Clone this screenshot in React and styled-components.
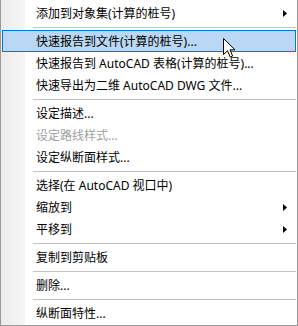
import React from 'react'
import styled, { createGlobalStyle } from "styled-components"

const GlobalStyle = createGlobalStyle`
  html, body {
    margin: 0;
    padding: 0;
    background: #ffffff;
  }
`;

const items = [
  { label: '添加到对象集(计算的桩号)', sub: true },
  'sep',
  { label: '快速报告到文件(计算的桩号)...', active: true },
  { label: '快速报告到 AutoCAD 表格(计算的桩号)...' },
  { label: '快速导出为二维 AutoCAD DWG 文件...' },
  'sep',
  { label: '设定描述...' },
  { label: '设定路线样式...', disabled: true },
  { label: '设定纵断面样式...' },
  'sep',
  { label: '选择(在 AutoCAD 视口中)' },
  { label: '缩放到', sub: true },
  { label: '平移到', sub: true },
  'sep',
  { label: '复制到剪贴板' },
  'sep',
  { label: '删除...' },
  'sep',
  { label: '纵断面特性...' },
];

function App() {
  return (
    <>
      <GlobalStyle />
      <Menu>
        {items.map((item, i) => {
          if (item === 'sep') return <Separator key={i} />

          return (
            <Item key={i} $active={item.active} $disabled={item.disabled}>
              <span>{item.label}</span>
              {item.sub && (
                <svg width="4" height="7" viewBox="0 0 4 7">
                  <polygon points="0,0 4,3.5 0,7" fill="#000" />
                </svg>
              )}
            </Item>
          )
        })}

        <Cursor width="13" height="20" viewBox="0 0 13 20">
          <path
            d="M0.5 0.5 L0.5 16.5 L4.5 12.8 L7.2 19 L9.6 18 L7 11.8 L12 11.8 Z"
            fill="#fff"
            stroke="#000"
            strokeWidth="1"
            strokeLinejoin="miter"
          />
        </Cursor>
      </Menu>
    </>
  )
}

const Menu = styled.div`
    position: relative;
    display: flex;
    flex-direction: column;
    width: 298px;
    height: 326px;
    box-sizing: border-box;
    padding: 2px 0 1px;
    border: 1px solid #999999;
    border-top: none;
    background: linear-gradient(to right, #ececec 0, #f5f5f5 24px, #ffffff 24px);
    font-family: "Noto Sans", "Noto Sans CJK SC", sans-serif;
    font-size: 12px;
    overflow: hidden;
`;

const Item = styled.div`
    display: flex;
    align-items: center;
    justify-content: space-between;
    height: 22px;
    flex: 0 0 22px;
    box-sizing: border-box;
    margin: 0 1px;
    padding: 0 8px 0 33px;
    border: 1px solid ${p => p.$active ? '#0078d7' : 'transparent'};
    background: ${p => p.$active ? '#bad7f3' : 'transparent'};
    color: ${p => p.$disabled ? '#a0a0a0' : '#000000'};
    line-height: 20px;
    white-space: nowrap;
    span{
        padding-top: 1px;
    }
    svg{
        flex: none;
    }
`;

const Separator = styled.div`
    flex: 0 0 6px;
    height: 6px;
    display: flex;
    align-items: center;
    margin: 0 1px 0 32px;
    &::before{
        content: '';
        display: block;
        width: 100%;
        height: 1px;
        background: #c4c4c4;
    }
`;

const Cursor = styled.svg`
    position: absolute;
    left: 222px;
    top: 38px;
`;

export default App;
